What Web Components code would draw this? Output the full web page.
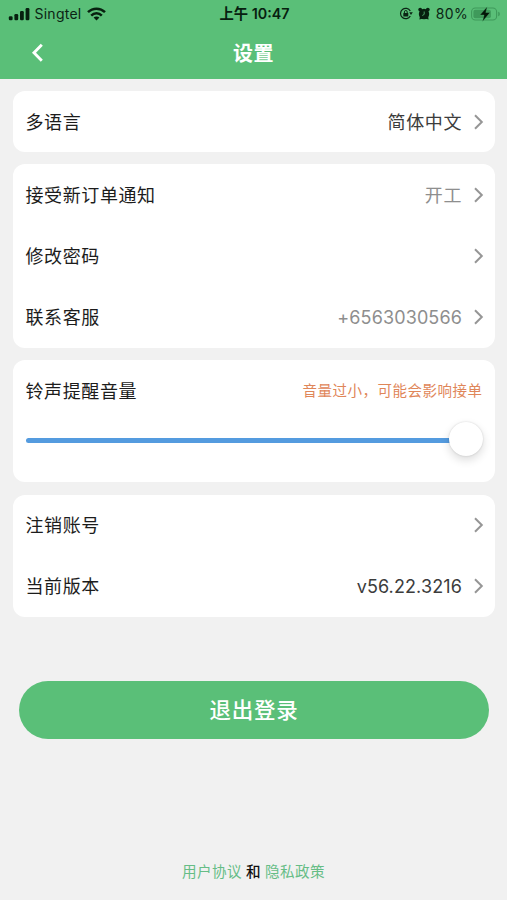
<!DOCTYPE html>
<html lang="zh-CN">
<head>
<meta charset="utf-8">
<title>设置</title>
<style>
html,body{margin:0;height:100%}
body{background:#f1f1f1;font-family:Inter,"Noto Sans CJK SC",sans-serif;color:#1c1c1c;overflow:hidden}
</style>
</head>
<body>
<settings-page></settings-page>
<script>
function define(name, html) {
  const template = document.createElement('template');
  template.innerHTML = html;
  customElements.define(name, class extends HTMLElement {
    constructor() {
      super();
      this.attachShadow({mode: 'open'}).append(template.content.cloneNode(true));
    }
  });
}

define('status-bar', `
<style>
:host{display:grid;grid-template-columns:1fr auto 1fr;align-items:center;height:27px;padding:0 6px 0 8px;color:#0b2414;font-size:14px;line-height:20px}
div{display:flex;align-items:center}
svg{display:block;flex:none}
.carrier{margin:0 6px 0 4.500px;font-size:14px;letter-spacing:.25px}
.time{font-weight:600;font-size:14.300px;white-space:pre;color:#07200f}
.right{justify-content:flex-end}
.pct{margin:0 3px 0 6px;letter-spacing:.35px}
</style>
<div>
 <svg width="22" height="14" viewBox="0 0 22 14" fill="#07200f"><rect x=".8" y="9.3" width="3.8" height="4" rx="1.2"/><rect x="6.4" y="7" width="3.8" height="6.3" rx="1.2"/><rect x="12" y="4" width="3.8" height="9.3" rx="1.2"/><rect x="17.6" y="1" width="3.8" height="12.3" rx="1.2"/></svg>
 <span class="carrier">Singtel</span>
 <svg width="19" height="14" viewBox="0 0 19 14" fill="none" stroke="#07200f" stroke-width="2.5"><path d="M1 5.200C5.800.5 13.200.5 18 5.200"/><path d="M4.200 8.600c3-3 7.600-3 10.600 0"/><path d="M9.500 13.400 6.600 10.600c1.600-1.500 4.200-1.500 5.800 0z" fill="#07200f" stroke="none"/></svg>
</div>
<span class="time">上午 10:47</span>
<div class="right">
 <svg width="14" height="13" viewBox="0 0 14 13" fill="none" stroke="#0b2414"><path d="M11.300 9A5.200 5.200 0 1 1 11.300 4" stroke-width="1.200"/><path d="M10.200 5.300h3.600L12 8z" fill="#0b2414" stroke="none"/><rect x="4.300" y="6" width="5" height="3.600" rx=".5" fill="#0b2414" stroke="none"/><path d="M5.400 6V4.900a1.400 1.400 0 0 1 2.800 0V6"/></svg>
 <svg style="margin-left:5px" width="12" height="13" viewBox="0 0 12 13"><g fill="#07200f"><circle cx="6" cy="7" r="5.200"/><circle cx="2.200" cy="2.600" r="1.900"/><circle cx="9.800" cy="2.600" r="1.900"/><path d="M1.400 12.600 2 9l3 2.500zM10.600 12.600 10 9l-3 2.500z"/></g><path d="M6.200 4.500v2.900L4.300 8.500" fill="none" stroke="#5abf78" stroke-width=".8"/></svg>
 <span class="pct">80%</span>
 <svg width="30" height="16" viewBox="0 0 30 16"><rect x=".6" y="2" width="25" height="12" rx="3.800" fill="none" stroke="#3f9a5b" stroke-width="1.100"/><rect x="2.400" y="3.800" width="17.500" height="8.400" rx="2" fill="#3f9a5b"/><path d="M27.200 5.700c2.200.5 2.200 4.100 0 4.600z" fill="#3f9a5b"/><path d="M16.200.8 8.900 9h4.200l-1.600 6.400 7.600-8.900h-4.300z" fill="#031608" stroke="#5abf78" stroke-width=".3"/></svg>
</div>`);

define('nav-bar', `
<style>
:host{display:grid;grid-template-columns:80px 1fr 80px;align-items:center;height:52px;color:#fff}
svg{display:block;margin-left:31px}
h1{margin:0;padding-top:1px;text-align:center;font-size:20px;line-height:28px;font-weight:600;letter-spacing:.6px}
</style>
<svg width="14" height="20" viewBox="0 0 14 20" fill="none" stroke="#fff" stroke-width="2.900"><path d="M10.800 1.700 3 9.700l7.800 8"/></svg>
<h1><slot></slot></h1>`);

define('settings-card', `
<style>:host{display:block;background:#fff;border-radius:12px}</style><slot></slot>`);

define('settings-row', `
<style>
:host{display:flex;align-items:center;height:61.200px;padding:0 11px 0 12.500px;font-size:18px;letter-spacing:.6px;color:#1c1c1c}
.label{flex:1;padding-bottom:2px}
.value{color:#3c3c3c;margin-right:11px;padding-bottom:2px}
:host([numeric]) .value{letter-spacing:.12px;padding-bottom:0}
:host([muted]) .value{color:#8e8e8e}
svg{display:block}
</style>
<span class="label"><slot></slot></span>
<span class="value"><slot name="value"></slot></span>
<svg width="11" height="16" viewBox="0 0 11 16" fill="none" stroke="#969696" stroke-width="2"><path d="M2 1.200 8.800 8 2 14.800"/></svg>`);

define('volume-control', `
<style>
:host{display:block;height:122px;padding:0 13px 0 12.500px;box-sizing:border-box}
.top{display:flex;align-items:center;justify-content:space-between;height:59px;padding-bottom:2px;font-size:18px;letter-spacing:.6px}
.warn{font-size:14.500px;letter-spacing:.5px;color:#df8659;margin-right:-.5px}
.slider{display:flex;align-items:center;height:38px}
.track{flex:1;height:5px;border-radius:3px 0 0 3px;background:#549bdf}
.thumb{width:34px;height:34px;border-radius:50%;background:#fff;box-shadow:0 4px 10px rgba(0,0,0,.14),0 0 2px rgba(0,0,0,.16);margin:-3px -1px 0 -1px}
</style>
<div class="top"><span><slot></slot></span><span class="warn"><slot name="warning"></slot></span></div>
<div class="slider"><div class="track"></div><div class="thumb"></div></div>`);

define('primary-button', `
<style>
:host{display:block}
button{display:block;width:100%;height:58.500px;border:0;padding:0 0 3px;border-radius:30px;background:#5abf78;color:#fff;font:500 21.500px Inter,"Noto Sans CJK SC",sans-serif;letter-spacing:.8px}
</style><button><slot></slot></button>`);

define('legal-links', `
<style>
:host{display:flex;justify-content:center;gap:4px;font-size:14.600px;line-height:22px;letter-spacing:.4px}
a{color:#66bd86}
b{font-weight:500;color:#111}
</style><a>用户协议</a><b>和</b><a>隐私政策</a>`);

define('settings-page', `
<style>
:host{display:flex;flex-direction:column;height:900px;background:#f1f1f1}
header{background:#5abf78;height:78.500px;flex:none}
main{display:flex;flex-direction:column;gap:12.300px;padding:12.500px 12px 0 13px}
primary-button{margin:63.500px 18px 0 19px}
legal-links{margin:auto 0 17px}
</style>
<header><status-bar></status-bar><nav-bar>设置</nav-bar></header>
<main>
<settings-card><settings-row>多语言<span slot="value">简体中文</span></settings-row></settings-card>
<settings-card>
<settings-row muted>接受新订单通知<span slot="value">开工</span></settings-row>
<settings-row>修改密码</settings-row>
<settings-row muted numeric>联系客服<span slot="value">+6563030566</span></settings-row>
</settings-card>
<settings-card><volume-control>铃声提醒音量<span slot="warning">音量过小，可能会影响接单</span></volume-control></settings-card>
<settings-card>
<settings-row>注销账号</settings-row>
<settings-row numeric>当前版本<span slot="value">v56.22.3216</span></settings-row>
</settings-card>
</main>
<primary-button>退出登录</primary-button>
<legal-links></legal-links>`);
</script>
</body>
</html>
